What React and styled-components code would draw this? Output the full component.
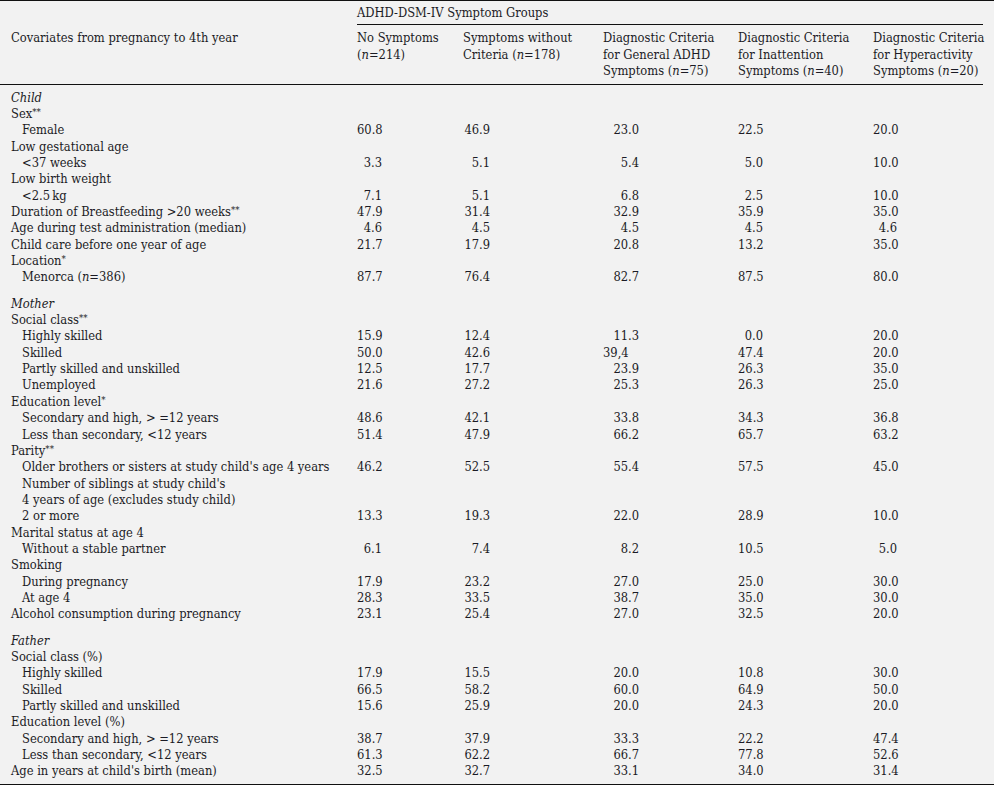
import React from "react";
import styled, { createGlobalStyle } from "styled-components";

const Global = createGlobalStyle`
  html, body {
    margin: 0;
    padding: 0;
    background: #f2f2f2;
  }
  body {
    font-family: "DejaVu Serif Condensed", "Liberation Serif", serif;
    font-size: 12.8px;
    color: #1b1b25;
  }
`;

const COLS = "357px 106px 140px 135px 135px 110px";

const Table = styled.div`
  width: 994px;
  border-top: 1px solid #111;
  border-bottom: 1px solid #111;
`;

const Head = styled.div`
  display: grid;
  grid-template-columns: ${COLS};
  border-bottom: 1px solid #111;
  width: 983px;
  padding-top: 4px;
  padding-bottom: 4px;
  line-height: 16.4px;
`;

const Spanner = styled.div`
  grid-column: 2 / 7;
  grid-row: 1;
  border-bottom: 1px solid #111;
  padding-bottom: 3px;
  margin-bottom: 5px;
`;

const CovHead = styled.div`
  grid-column: 1;
  grid-row: 2;
  padding-left: 11px;
`;

const ColHead = styled.div`
  grid-row: 2;
  white-space: nowrap;
`;

const Body = styled.div`
  padding: 5px 0 4px;
  line-height: 16.35px;
`;

const Section = styled.div`
  & + & {
    margin-top: 10px;
  }
`;

const Row = styled.div`
  display: grid;
  grid-template-columns: ${COLS};
  height: 16.35px;
  white-space: nowrap;
`;

const Label = styled.div`
  padding-left: ${(p) => (p.$indent ? 22 : 11)}px;
  font-style: ${(p) => (p.$italic ? "italic" : "normal")};
`;

const Num = styled.div`
  & > span {
    display: inline-block;
    width: ${(p) => p.$end}px;
    text-align: right;
    padding-right: ${(p) => p.$shift || 0}px;
    box-sizing: border-box;
  }
`;

const Star = styled.sup`
  font-size: 9.5px;
  line-height: 0;
  vertical-align: 3px;
`;

const N = ({ n }) => (
  <>
    (<i>n</i>=<span>{n}</span>)
  </>
);

const ENDS = [25, 27, 36, 25, 24];

const sections = [
  {
    title: "Child",
    rows: [
      { label: <>Sex<Star>**</Star></> },
      { label: "Female", indent: 1, v: ["60.8", "46.9", "23.0", "22.5", "20.0"] },
      { label: "Low gestational age" },
      { label: "<37 weeks", indent: 1, v: ["3.3", "5.1", "5.4", "5.0", "10.0"] },
      { label: "Low birth weight" },
      { label: "<2.5\u2009kg", indent: 1, v: ["7.1", "5.1", "6.8", "2.5", "10.0"] },
      { label: <>Duration of Breastfeeding &gt;20 weeks<Star>**</Star></>, v: ["47.9", "31.4", "32.9", "35.9", "35.0"] },
      { label: "Age during test administration (median)", v: ["4.6", "4.5", "4.5", "4.5", "4.6"] },
      { label: "Child care before one year of age", v: ["21.7", "17.9", "20.8", "13.2", "35.0"] },
      { label: <>Location<Star>*</Star></> },
      { label: <>Menorca <N n="386" /></>, indent: 1, v: ["87.7", "76.4", "82.7", "87.5", "80.0"] },
    ],
  },
  {
    title: "Mother",
    rows: [
      { label: <>Social class<Star>**</Star></> },
      { label: "Highly skilled", indent: 1, v: ["15.9", "12.4", "11.3", "0.0", "20.0"] },
      { label: "Skilled", indent: 1, v: ["50.0", "42.6", "39,4", "47.4", "20.0"], shift: { 2: 11 } },
      { label: "Partly skilled and unskilled", indent: 1, v: ["12.5", "17.7", "23.9", "26.3", "35.0"] },
      { label: "Unemployed", indent: 1, v: ["21.6", "27.2", "25.3", "26.3", "25.0"] },
      { label: <>Education level<Star>*</Star></> },
      { label: "Secondary and high, > =12 years", indent: 1, v: ["48.6", "42.1", "33.8", "34.3", "36.8"] },
      { label: "Less than secondary, <12 years", indent: 1, v: ["51.4", "47.9", "66.2", "65.7", "63.2"] },
      { label: <>Parity<Star>**</Star></> },
      { label: "Older brothers or sisters at study child's age 4 years", indent: 1, v: ["46.2", "52.5", "55.4", "57.5", "45.0"] },
      { label: "Number of siblings at study child's", indent: 1 },
      { label: "4 years of age (excludes study child)", indent: 1 },
      { label: "2 or more", indent: 1, v: ["13.3", "19.3", "22.0", "28.9", "10.0"] },
      { label: "Marital status at age 4" },
      { label: "Without a stable partner", indent: 1, v: ["6.1", "7.4", "8.2", "10.5", "5.0"] },
      { label: "Smoking" },
      { label: "During pregnancy", indent: 1, v: ["17.9", "23.2", "27.0", "25.0", "30.0"] },
      { label: "At age 4", indent: 1, v: ["28.3", "33.5", "38.7", "35.0", "30.0"] },
      { label: "Alcohol consumption during pregnancy", v: ["23.1", "25.4", "27.0", "32.5", "20.0"] },
    ],
  },
  {
    title: "Father",
    rows: [
      { label: "Social class (%)" },
      { label: "Highly skilled", indent: 1, v: ["17.9", "15.5", "20.0", "10.8", "30.0"] },
      { label: "Skilled", indent: 1, v: ["66.5", "58.2", "60.0", "64.9", "50.0"] },
      { label: "Partly skilled and unskilled", indent: 1, v: ["15.6", "25.9", "20.0", "24.3", "20.0"] },
      { label: "Education level (%)" },
      { label: "Secondary and high, > =12 years", indent: 1, v: ["38.7", "37.9", "33.3", "22.2", "47.4"] },
      { label: "Less than secondary, <12 years", indent: 1, v: ["61.3", "62.2", "66.7", "77.8", "52.6"] },
      { label: "Age in years at child's birth (mean)", v: ["32.5", "32.7", "33.1", "34.0", "31.4"] },
    ],
  },
];

export default function App() {
  return (
    <>
      <Global />
      <Table>
        <Head>
          <Spanner>ADHD-DSM-IV Symptom Groups</Spanner>
          <CovHead>Covariates from pregnancy to 4th year</CovHead>
          <ColHead>
            No Symptoms
            <br />
            <N n="214" />
          </ColHead>
          <ColHead>
            Symptoms without
            <br />
            Criteria <N n="178" />
          </ColHead>
          <ColHead>
            Diagnostic Criteria
            <br />
            for General ADHD
            <br />
            Symptoms <N n="75" />
          </ColHead>
          <ColHead>
            Diagnostic Criteria
            <br />
            for Inattention
            <br />
            Symptoms <N n="40" />
          </ColHead>
          <ColHead>
            Diagnostic Criteria
            <br />
            for Hyperactivity
            <br />
            Symptoms <N n="20" />
          </ColHead>
        </Head>
        <Body>
          {sections.map((s) => (
            <Section key={s.title}>
              <Row>
                <Label $italic>{s.title}</Label>
              </Row>
              {s.rows.map((r, i) => (
                <Row key={i}>
                  <Label $indent={r.indent}>{r.label}</Label>
                  {(r.v || []).map((val, j) => (
                    <Num key={j} $end={ENDS[j]} $shift={r.shift && r.shift[j]}>
                      <span>{val}</span>
                    </Num>
                  ))}
                </Row>
              ))}
            </Section>
          ))}
        </Body>
      </Table>
    </>
  );
}
